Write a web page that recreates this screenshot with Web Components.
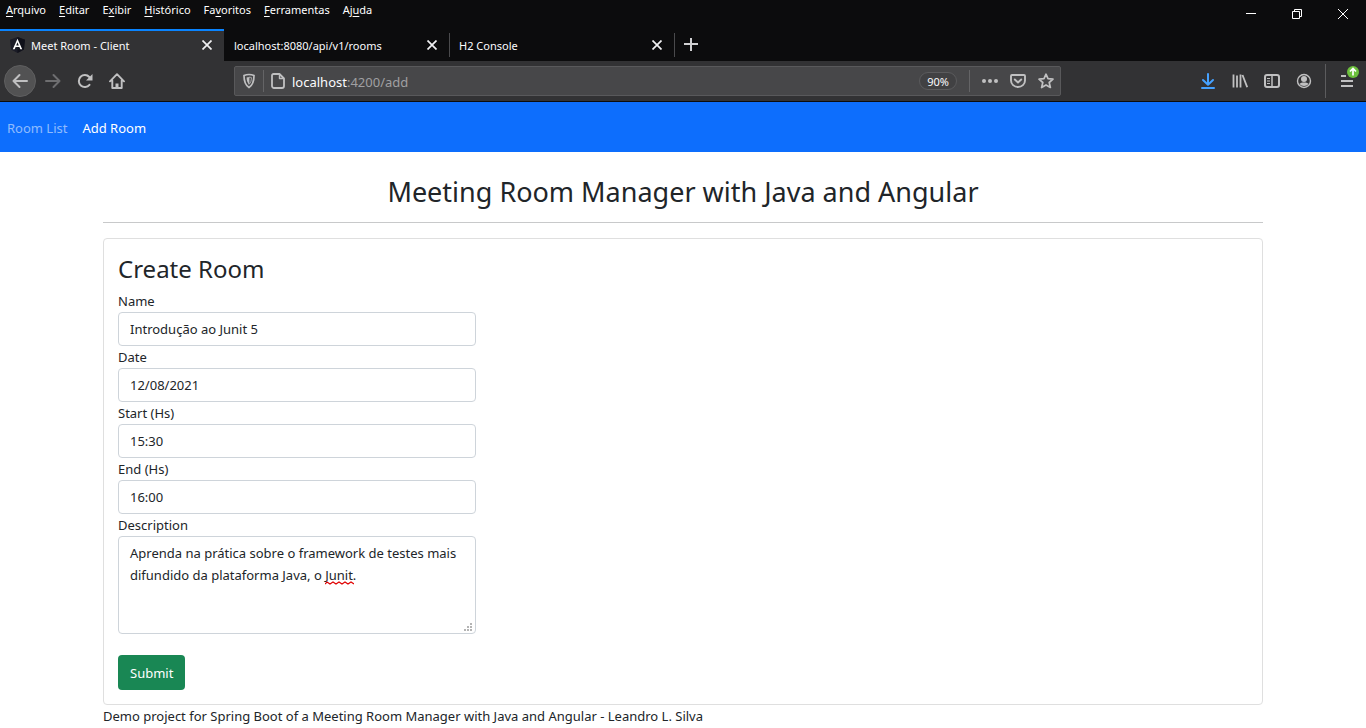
<!DOCTYPE html>
<html lang="pt-BR">
<head>
<meta charset="utf-8">
<meta name="viewport" content="width=device-width, initial-scale=1">
<title>Meet Room - Client</title>
<style>
  html, body { margin: 0; }
  body {
    background: #fff;
    color: #212529;
    font: 13px/22px "Noto Sans", "Open Sans", sans-serif;
  }
</style>
</head>
<body>
<browser-chrome></browser-chrome>
<site-nav></site-nav>
<room-page>
  <span slot="title">Meeting Room Manager with Java and Angular</span>
  <room-form></room-form>
  <span slot="footer">Demo project for Spring Boot of a Meeting Room Manager with Java and Angular - Leandro L. Silva</span>
</room-page>

<script>
const define = (name, html, setup) => {
  const template = document.createElement('template');
  template.innerHTML = html;
  customElements.define(name, class extends HTMLElement {
    constructor() {
      super();
      this.attachShadow({ mode: 'open' }).append(template.content.cloneNode(true));
    }
    connectedCallback() {
      if (setup) setup(this, this.shadowRoot);
    }
  });
};

/* Square, label-less button holding one slotted icon */
define('icon-button', `
  <style>
    :host { display: block; flex: none; width: 32px; height: 32px; color: #c0c0c1; }
    button {
      display: flex; align-items: center; justify-content: center;
      width: 100%; height: 100%; margin: 0; padding: 0;
      border: 0; background: none; color: inherit;
    }
    :host([round]) button { background: #525253; border: 1px solid #5f5f60; border-radius: 50%; }
    :host([disabled]) { color: #6e6e70; }
  </style>
  <button type="button"><slot></slot></button>`,
  (host, root) => root.querySelector('button').setAttribute('aria-label', host.getAttribute('label')));

define('menu-bar', `
  <style>
    :host { display: flex; justify-content: space-between; height: 29px; }
    nav { display: flex; gap: 13px; padding: 0 6px; }
    nav button {
      height: 20px; padding: 0; border: 0; background: none;
      color: #fff; font: inherit; line-height: 20px;
    }
    u { text-underline-offset: 2px; }
    .window { display: flex; }
    .window icon-button { width: 46px; height: 28px; color: #fff; }
  </style>
  <nav>
    <button type="button"><u>A</u>rquivo</button>
    <button type="button"><u>E</u>ditar</button>
    <button type="button">E<u>x</u>ibir</button>
    <button type="button"><u>H</u>istórico</button>
    <button type="button">Fa<u>v</u>oritos</button>
    <button type="button"><u>F</u>erramentas</button>
    <button type="button">Aj<u>u</u>da</button>
  </nav>
  <div class="window">
    <icon-button label="Minimizar"><svg width="10" height="10" viewBox="0 0 10 10" stroke="currentColor"><path d="M0 4.500h10"/></svg></icon-button>
    <icon-button label="Restaurar"><svg width="10" height="10" viewBox="0 0 10 10" fill="none" stroke="currentColor"><path d="M.5 2.500h7v7h-7zM2.500 2.500v-2h7v7h-2"/></svg></icon-button>
    <icon-button label="Fechar"><svg width="10" height="10" viewBox="0 0 10 10" stroke="currentColor"><path d="M0 0l10 10M10 0L0 10"/></svg></icon-button>
  </div>`);

define('browser-tab', `
  <style>
    :host {
      box-sizing: border-box; display: flex; align-items: center; gap: 6px;
      flex: 0 1 225px; height: 32px; padding: 0 1px 0 10px;
      color: #fbfbfe; white-space: nowrap;
    }
    :host([active]) { flex-basis: 224px; background: #323234; box-shadow: inset 0 2px #0a84ff; }
    .title { flex: 1; overflow: hidden; padding-top: 2px; }
    icon-button { color: #f0f0f2; }
  </style>
  <slot name="icon"></slot>
  <span class="title"><slot></slot></span>
  <icon-button label="Fechar aba"><svg width="10" height="10" viewBox="0 0 10 10" stroke="currentColor" stroke-width="1.700"><path d="M.5.5l9 9M9.500.5l-9 9"/></svg></icon-button>`);

define('tab-strip', `
  <style>
    :host { display: flex; height: 32px; }
    .add { padding-left: 1px; color: #d0d0d2; }
    .ruled { background: linear-gradient(#4a4a4c, #4a4a4c) 0 4px / 1px 24px no-repeat; }
  </style>
  <browser-tab active>
    <svg slot="icon" width="15" height="16" viewBox="0 0 15 16">
      <path d="M7.500 0L15 2.700l-1.100 9.800L7.500 16 1.100 12.500 0 2.700z" fill="#1b1c27"/>
      <path d="M7.500 0v16l6.400-3.500L15 2.700z" fill="#10111a"/>
      <path d="M7.500 1.800L2.800 12.200h1.900l.9-2.300h3.800l.9 2.300h1.900zM7.500 5.200l1.300 3.200H6.200z" fill="#fff"/>
    </svg>Meet Room - Client</browser-tab>
  <browser-tab>localhost:8080/api/v1/rooms</browser-tab>
  <browser-tab class="ruled">H2 Console</browser-tab>
  <icon-button class="add ruled" label="Nova aba"><svg width="14" height="14" viewBox="0 0 14 14" stroke="currentColor" stroke-width="2"><path d="M0 6h14M7 0v13"/></svg></icon-button>`);

define('address-bar', `
  <style>
    :host {
      box-sizing: border-box; display: flex; align-items: center; flex: 1;
      height: 30px; min-width: 0;
      background: #474749; border: 1px solid #59595b; border-radius: 2px;
      font-size: 13px;
    }
    icon-button { width: 28px; height: 28px; }
    .rule { flex: none; width: 1px; height: 22px; background: #646466; }
    .field { display: grid; flex: 1; align-items: center; padding-top: 2px; }
    .actions { display: flex; padding-left: 6px; }
    a { color: #a0a0a2; text-decoration: none; }
    b { color: #fbfbfe; font-weight: 400; }
    .zoom {
      width: 38px; height: 18px; margin-right: 12px; padding: 1px 0 0; border: 1px solid #5b5b5d; border-radius: 9px;
      background: #414143; color: #fbfbfe; font: inherit; font-size: 11px; line-height: 16px;
    }
  </style>
  <icon-button label="Proteção"><svg width="14" height="16" viewBox="0 0 14 16" fill="none" stroke="currentColor"><path stroke-width="1.700" d="M7 1.500c2 0 3.500.4 5 1.100 0 5.400-.8 9.400-5 11.900C2.800 12 2 8 2 2.600c1.500-.7 3-1.100 5-1.100z"/><path d="M7 4.200v7.100c1.900-1.700 2.300-3.700 2.400-6.700C8.700 4.400 8 4.200 7 4.200z" fill="none" stroke-width=".8"/><path d="M7 4.200c-1 0-1.700.2-2.400.4.1 3 .5 5 2.400 6.700z" fill="currentColor" stroke="none"/></svg></icon-button>
  <span class="rule"></span>
  <icon-button label="Informações do site"><svg width="14" height="16" viewBox="0 0 14 16" fill="none" stroke="currentColor" stroke-width="1.800" stroke-linejoin="round"><path d="M2.500 1h6L13 5.500V13a2 2 0 0 1-2 2H3a2 2 0 0 1-2-2V2.500A1.500 1.500 0 0 1 2.500 1z"/><path d="M8.500 1v4.500H13" stroke-width="1.400"/></svg></icon-button>
  <span class="field"><a href="#add"><b>localhost</b>:4200/add</a></span>
  <button class="zoom" type="button">90%</button>
  <span class="rule"></span>
  <span class="actions">
    <icon-button label="Ações da página"><svg width="16" height="4" viewBox="0 0 16 4" fill="currentColor"><circle cx="2" cy="2" r="2"/><circle cx="8" cy="2" r="2"/><circle cx="14" cy="2" r="2"/></svg></icon-button>
    <icon-button label="Pocket"><svg width="16" height="16" viewBox="0 0 16 16" fill="none" stroke="currentColor" stroke-width="1.900" stroke-linecap="round" stroke-linejoin="round"><path d="M2 2h12a1 1 0 0 1 1 1v4.500a7 6.500 0 0 1-14 0V3a1 1 0 0 1 1-1z"/><path d="M4.800 6.500L8 9.500l3.200-3"/></svg></icon-button>
    <icon-button label="Favoritar"><svg width="16" height="16" viewBox="0 0 16 16" fill="none" stroke="currentColor" stroke-width="1.700" stroke-linejoin="round"><path d="M8 1.200l2 4.500 5 .5-3.800 3.300 1.200 5L8 11.900l-4.400 2.600 1.200-5L1 6.200l5-.5z"/></svg></icon-button>
  </span>`);

define('tool-bar', `
  <style>
    :host {
      display: flex; align-items: center; height: 40px; padding: 0 3px 0 4px;
      background: #323234; border-bottom: 1px solid #0c0c0d;
    }
    .back { margin-right: 1px; }
    address-bar { margin: 0 131px 0 101px; }
    .download { color: #45a1ff; }
    .rule { width: 1px; height: 34px; margin: 0 5px; background: #5c5c5e; }
    .menu { position: relative; }
    .badge { position: absolute; top: 1px; right: 4px; }
  </style>
  <icon-button class="back" round label="Voltar"><svg width="16" height="16" viewBox="0 0 16 16" fill="none" stroke="currentColor" stroke-width="2" stroke-linecap="round" stroke-linejoin="round"><path d="M15 8H1.500M7.500 2l-6 6 6 6"/></svg></icon-button>
  <icon-button disabled label="Avançar"><svg width="16" height="16" viewBox="0 0 16 16" fill="none" stroke="currentColor" stroke-width="2" stroke-linecap="round" stroke-linejoin="round"><path d="M1 8h13.500M8.500 2l6 6-6 6"/></svg></icon-button>
  <icon-button label="Recarregar"><svg width="16" height="16" viewBox="0 0 16 16" fill="none" stroke="currentColor" stroke-width="2" stroke-linecap="round"><path d="M12.500 11.800A6 6 0 1 1 12.300 4"/><path d="M15.500 1v6.500H9z" fill="currentColor" stroke="none"/></svg></icon-button>
  <icon-button label="Início"><svg width="16" height="16" viewBox="0 0 16 16" fill="none" stroke="currentColor" stroke-width="1.900" stroke-linecap="round" stroke-linejoin="round"><path d="M1 8.300L8 1.200l7 7.100M3.300 7.500V15h9.400V7.500"/><path d="M8 14.500v-4" stroke-width="3" stroke-linecap="butt"/></svg></icon-button>
  <address-bar></address-bar>
  <icon-button class="download" label="Downloads"><svg width="14" height="16" viewBox="0 0 14 16" fill="none" stroke="currentColor" stroke-width="2" stroke-linecap="round" stroke-linejoin="round"><path d="M7 1v10.500M2 7l5 4.800L12 7M1 15h12"/></svg></icon-button>
  <icon-button label="Biblioteca"><svg width="16" height="16" viewBox="0 0 16 16" fill="none" stroke="currentColor" stroke-width="1.800"><path d="M1.500 1.500v13M5 2.500v12M8.500 1.500v13M10.500 2l4.700 12.300"/></svg></icon-button>
  <icon-button label="Painéis"><svg width="16" height="16" viewBox="0 0 16 16" fill="none" stroke="currentColor"><rect x="1" y="2" width="14" height="12" rx="2" stroke-width="2"/><path d="M8 2v12" stroke-width="1.500"/><path d="M3 5.500h3M3 8h3M3 10.500h3"/></svg></icon-button>
  <icon-button label="Conta"><svg width="16" height="16" viewBox="0 0 16 16" fill="currentColor"><circle cx="8" cy="8" r="6.500" fill="none" stroke="currentColor" stroke-width="1.400"/><circle cx="8" cy="6" r="3"/><path d="M3.500 10.800c1-.9 2.500-1.300 4.500-1.300s3.500.4 4.500 1.300C11.500 12.300 9.900 13 8 13s-3.500-.7-4.500-2.200z"/></svg></icon-button>
  <span class="rule"></span>
  <icon-button class="menu" label="Abrir menu">
    <svg width="12" height="12" viewBox="0 0 12 12" stroke="currentColor" stroke-width="2"><path d="M0 1h5M0 6h12M0 11h12"/></svg>
    <svg class="badge" width="12" height="12" viewBox="0 0 12 12"><circle cx="6" cy="6" r="6" fill="#6cc03c"/><path d="M6 9.500v-7M3 5.500l3-3 3 3" fill="none" stroke="#fff" stroke-width="1.700"/></svg>
  </icon-button>`);

define('browser-chrome', `
  <style>:host { display: block; background: #0c0c0d; color: #fff; font-size: 11px; line-height: 20px; }</style>
  <menu-bar></menu-bar>
  <tab-strip></tab-strip>
  <tool-bar></tool-bar>`);

define('site-nav', `
  <style>
    :host { display: block; background: #0d6efd; }
    nav { display: flex; gap: 15px; padding: 15px 7px 13px; }
    a { color: rgba(255, 255, 255, .55); text-decoration: none; }
    a[aria-current] { color: #fff; }
  </style>
  <nav><a href="#rooms">Room List</a><a href="#add" aria-current="page">Add Room</a></nav>`);

define('room-page', `
  <style>
    :host { display: block; max-width: 1160px; margin: 0 auto; padding: 22px 14px 0; }
    h1 { margin: 0; font-size: 27px; font-weight: 400; line-height: 36px; text-align: center; }
    hr { height: 1px; margin: 12px 0 15px; border: 0; background: #c8c9ca; }
    main { padding: 14px; border: 1px solid #dfdfdf; border-radius: 4px; }
    footer { line-height: 22px; }
  </style>
  <header><h1><slot name="title"></slot></h1><hr></header>
  <main><slot></slot></main>
  <footer><slot name="footer"></slot></footer>`);

const controlCss = `
  :host { display: block; }
  label { display: block; line-height: 22px; }
  .control {
    display: block; box-sizing: border-box; width: 100%; margin: 0; padding: 5px 11px;
    border: 1px solid #ced4da; border-radius: 4px; background: #fff;
    color: inherit; font: inherit; line-height: 22px; outline: 0;
  }`;

define('text-field', `
  <style>${controlCss} .control { height: 34px; }</style>
  <label for="control"><slot></slot></label>
  <input class="control" id="control" type="text">`,
  (host, root) => { root.querySelector('input').value = host.getAttribute('value'); });

define('text-area', `
  <style>${controlCss}
    .box { position: relative; }
    textarea.control { height: 98px; resize: none; overflow: hidden; }
    svg { position: absolute; pointer-events: none; }
    .squiggle { left: 207px; top: 45px; }
    .grip { right: 3px; bottom: 2px; }
  </style>
  <label for="control"><slot></slot></label>
  <div class="box">
    <textarea class="control" id="control" spellcheck="false"></textarea>
    <svg class="squiggle" width="29" height="4" viewBox="0 0 29 4" fill="none" stroke="#e00000" stroke-width="1.200"><path d="M0 3l2-2 3 2 3-2 3 2 3-2 3 2 3-2 3 2 3-2 3 2"/></svg>
    <svg class="grip" width="9" height="9" viewBox="0 0 9 9" fill="#b4b4b4"><path d="M6 0h2v2H6zM3 3h2v2H3zM6 3h2v2H6zM0 6h2v2H0zM3 6h2v2H3zM6 6h2v2H6z"/></svg>
  </div>`,
  (host, root) => { root.querySelector('textarea').value = host.getAttribute('value'); });

define('room-form', `
  <style>
    :host { display: block; }
    h2 { margin: 0 0 5px; font-size: 24px; font-weight: 400; line-height: 32px; }
    form { max-width: 358px; }
    .submit {
      display: block; margin-top: 21px; padding: 7px 12px 6px; border: 0; border-radius: 4px;
      background: #198754; color: #fff; font: inherit; line-height: 22px;
    }
  </style>
  <h2>Create Room</h2>
  <form>
    <text-field value="Introdução ao Junit 5">Name</text-field>
    <text-field value="12/08/2021">Date</text-field>
    <text-field value="15:30">Start (Hs)</text-field>
    <text-field value="16:00">End (Hs)</text-field>
    <text-area value="Aprenda na prática sobre o framework de testes mais difundido da plataforma Java, o Junit.">Description</text-area>
    <button class="submit" type="submit">Submit</button>
  </form>`);
</script>
</body>
</html>
